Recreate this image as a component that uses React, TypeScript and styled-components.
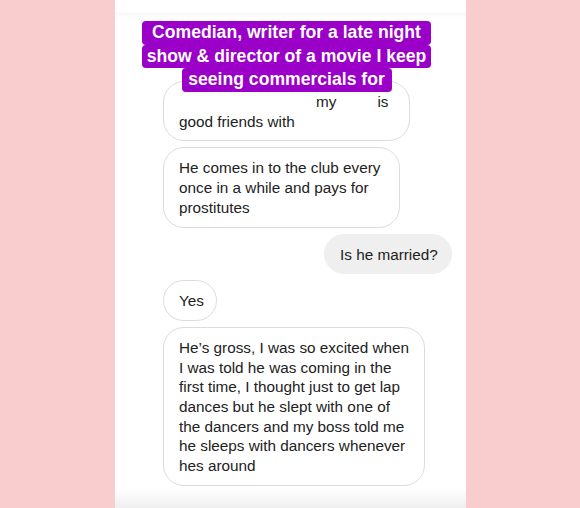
import React, { FunctionComponent } from "react";
import styled, { createGlobalStyle } from "styled-components";

// GLOBAL //
const GlobalStyle = createGlobalStyle`
  html, body {
    margin: 0;
    padding: 0;
    background: #f9cccd;
  }
  body {
    font-family: "Liberation Sans", Arial, sans-serif;
  }
`;

// DATA //
const captionLines = [
  { text: "Comedian, writer for a late night", width: 289 },
  { text: "show & director of a movie I keep", width: 289 },
  { text: "seeing commercials for", width: 210 },
];

const App: FunctionComponent = () => {
  return (
    <>
      <GlobalStyle />
      <Page>
        <Panel>
          <Chat>
            <Bubble $width={247}>
              <Blank $width={137} />my<Blank $width={41} />is
              <br />
              good friends with
            </Bubble>
            <Bubble $width={237}>
              He comes in to the club every
              <br />
              once in a while and pays for
              <br />
              prostitutes
            </Bubble>
            <Bubble $mine $width={128}>
              Is he married?
            </Bubble>
            <Bubble $width={54}>Yes</Bubble>
            <Bubble $width={262}>
              He’s gross, I was so excited when
              <br />
              I was told he was coming in the
              <br />
              first time, I thought just to get lap
              <br />
              dances but he slept with one of
              <br />
              the dancers and my boss told me
              <br />
              he sleeps with dancers whenever
              <br />
              hes around
            </Bubble>
          </Chat>

          <Caption>
            {captionLines.map((line) => (
              <CaptionLine key={line.text} $width={line.width}>
                {line.text}
              </CaptionLine>
            ))}
          </Caption>
        </Panel>
      </Page>
    </>
  );
};

// STYLED COMPONENTS //
const Page = styled.div`
  width: 580px;
  height: 508px;
  display: flex;
  padding-left: 115px;
  box-sizing: border-box;
  overflow: hidden;
`;

const Panel = styled.div`
  position: relative;
  width: 351px;
  height: 508px;
  background: linear-gradient(
    to bottom,
    #ffffff 0px,
    #ffffff 11px,
    #f8f8f8 14px,
    #ffffff 18px,
    #ffffff 488px,
    #efefef 508px
  );
`;

const Chat = styled.div`
  display: flex;
  flex-direction: column;
  align-items: flex-start;
  gap: 6px;
  padding: 81px 14px 0 48px;
`;

const Bubble = styled.div<{ $mine?: boolean; $width: number }>`
  box-sizing: border-box;
  width: ${(p) => p.$width}px;
  align-self: ${(p) => (p.$mine ? "flex-end" : "flex-start")};
  padding: 10px 10px 9px 15px;
  border-radius: 21px;
  border: 1px solid ${(p) => (p.$mine ? "#efefef" : "#dcdcdc")};
  background: ${(p) => (p.$mine ? "#efefef" : "#ffffff")};
  color: #222222;
  font-size: 15.3px;
  line-height: 19.7px;
  white-space: nowrap;
`;

const Blank = styled.span<{ $width: number }>`
  display: inline-block;
  width: ${(p) => p.$width}px;
`;

const Caption = styled.div`
  position: absolute;
  top: 21px;
  left: 0;
  right: 8px;
  display: flex;
  flex-direction: column;
  align-items: center;
`;

const CaptionLine = styled.div<{ $width: number }>`
  width: ${(p) => p.$width}px;
  height: 23.6px;
  display: flex;
  align-items: center;
  justify-content: center;
  background: #9a00c8;
  border-radius: 4px;
  color: #ffffff;
  font-weight: 700;
  font-size: 17.6px;
  white-space: nowrap;
`;

export default App;
